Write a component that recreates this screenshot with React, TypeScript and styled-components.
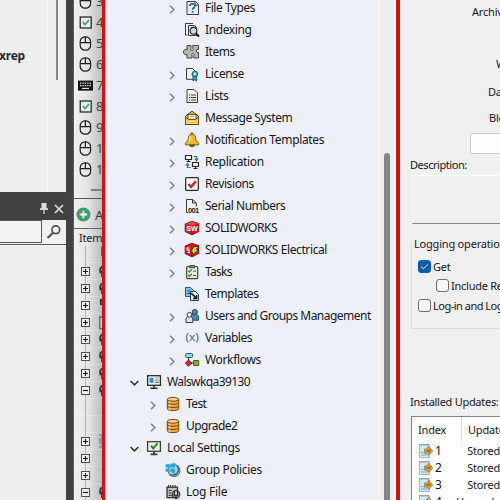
import React from 'react';
import styled, { createGlobalStyle } from 'styled-components';

const Global = createGlobalStyle`
  * { box-sizing: border-box; }
  body { margin: 0; overflow: hidden; }
`;

const Screen = styled.div`
  width: 500px;
  height: 500px;
  overflow: hidden;
  display: flex;
  background: #efefef;
  color: #17171b;
  font-family: 'Noto Sans', 'Open Sans', sans-serif;
  font-size: 12px;
  white-space: nowrap;
  svg { display: block; flex: none; overflow: visible; }
`;

/* ---------- far left pane ---------- */

const LeftPane = styled.div`
  width: 66px;
  flex: none;
  display: flex;
  flex-direction: column;
  background: #efefef;
`;
const LeftTop = styled.div`
  height: 192px;
  display: flex;
  justify-content: space-between;
  overflow: hidden;
`;
const Keyword = styled.div`
  width: 49px;
  padding-top: 48px;
  margin-left: -1px;
  font-weight: 700;
  font-size: 12px;
  line-height: 16px;
  letter-spacing: -0.2px;
  color: #25252d;
  border-right: 1px solid #fafafa;
`;
const LeftThumb = styled.div`
  width: 2px;
  height: 80px;
  margin-right: 8px;
  background: #858585;
`;
const PanelTitle = styled.div`
  height: 28px;
  background: #414141;
  display: flex;
  justify-content: flex-end;
  align-items: flex-end;
  gap: 6px;
  padding: 0 2px 6px 0;
`;
const SearchRow = styled.div`
  height: 25px;
  display: flex;
  border-bottom: 1px solid #5a5a5a;
`;
const SearchInput = styled.div`
  width: 42px;
  height: 23px;
  background: #f3f3f3;
  border: 1px solid #555;
  border-left: 0;
`;
const SearchButton = styled.div`
  flex: 1;
  display: flex;
  align-items: center;
  justify-content: center;
  background: #f1f1f1;
`;
const Splitter = styled.div`
  width: 8px;
  flex: none;
  background: #434343;
  border-right: 1px solid #5a5a5a;
`;

/* ---------- middle strip ---------- */

const Strip = styled.div`
  width: 28px;
  flex: none;
  display: flex;
  flex-direction: column;
  overflow: hidden;
  background: linear-gradient(90deg, #f1f1f1 0%, #e4e4e4 50%, #bcbcbc 100%);
`;
const InputList = styled.div`
  flex: none;
  height: 199px;
  overflow: hidden;
  border-bottom: 1px solid #555;
`;
const InputRow = styled.div`
  height: 21px;
  display: flex;
  align-items: center;
  padding-left: 4px;
  gap: 3px;
  font-size: 13px;
  line-height: 21px;
  color: #444;
  &:first-child { margin-top: -9px; }
`;
const StripThumb = styled.div`
  height: 2px;
  margin: 9px 0 0 17px;
  background: #818181;
`;
const AddRow = styled.div`
  flex: none;
  height: 30px;
  display: flex;
  align-items: center;
  gap: 4px;
  padding: 2px 0 0 2px;
  border-bottom: 1px solid #666;
  font-size: 13px;
  color: #333;
`;
const ItemHead = styled.div`
  flex: none;
  height: 17px;
  padding-left: 5px;
  font-size: 11px;
  line-height: 18px;
  letter-spacing: -0.2px;
  color: #222;
`;
const NodeRow = styled.div`
  height: 17px;
  display: flex;
  align-items: center;
  padding-left: 7px;
  gap: 9px;
  border-bottom: 1px solid rgba(255, 255, 255, 0.25);
`;

/* ---------- tree ---------- */

const RedBar = styled.div<{ $w: number }>`
  width: ${(p) => p.$w}px;
  flex: none;
  background: #df0b0f;
`;
const TreePane = styled.div`
  width: 274px;
  flex: none;
  background: #edf0f9;
  border-left: 2px solid #f6f3f7;
  border-right: 1px solid #fff;
  overflow: hidden;
`;
const TreeRow = styled.div<{ $indent: number }>`
  height: 22px;
  display: flex;
  align-items: center;
  padding-left: ${(p) => p.$indent}px;
  &:first-child { margin-top: -3px; }
`;
const ArrowCell = styled.div`
  width: 12px;
  flex: none;
  margin-right: 6px;
  padding-top: 2px;
  display: flex;
  justify-content: center;
`;
const TreeLabel = styled.span<{ $sp: number }>`
  margin-left: 5px;
  font-size: 12px;
  line-height: 22px;
  letter-spacing: ${(p) => p.$sp}px;
`;
const ScrollTrack = styled.div`
  width: 17px;
  flex: none;
  background: #efefef;
  border-right: 2px solid #fafafa;
  padding: 153px 0 0 5px;
`;
const ScrollThumb = styled.div`
  width: 6px;
  height: 350px;
  border-radius: 3px;
  background: #858587;
`;

/* ---------- right pane ---------- */

const RightPane = styled.div`
  flex: 1;
  min-width: 0;
  display: flex;
  flex-direction: column;
  background: #f0f0f0;
  overflow: hidden;
  font-size: 11px;
  letter-spacing: -0.2px;
`;
const FieldLabel = styled.div<{ $x: number; $h: number }>`
  flex: none;
  height: ${(p) => p.$h}px;
  line-height: 16px;
  padding-left: ${(p) => p.$x}px;
`;
const DescLabel = styled.div`
  flex: none;
  height: 21px;
  line-height: 22px;
  padding-left: 10px;
  letter-spacing: -0.45px;
`;
const Fields = styled.div`
  height: 133px;
  flex: none;
  padding-top: 4px;
`;
const FieldBox = styled.div`
  flex: none;
  height: 21px;
  margin-left: 70px;
  width: 60px;
  border: 1px solid #c5c5c5;
  border-radius: 3px;
  background: #fdfdfd;
`;
const DescBox = styled.div`
  flex: none;
  height: 49px;
  margin-left: 12px;
  border: 1px solid #fff;
  border-right: 0;
  border-bottom: 1px solid #828282;
`;
const Group = styled.div`
  flex: none;
  margin: 12px 0 0 11px;
  height: 93px;
  display: flex;
  flex-direction: column;
`;
const GroupHead = styled.div`
  height: 16px;
  line-height: 15px;
  display: flex;
  gap: 2px;
  letter-spacing: -0.2px;
`;
const GroupTick = styled.div`
  width: 6px;
  margin-top: 6px;
  border-top: 1px solid #dcdcdc;
  border-left: 1px solid #dcdcdc;
`;
const GroupBody = styled.div`
  flex: 1;
  border-left: 1px solid #dcdcdc;
  border-bottom: 1px solid #dcdcdc;
  padding-top: 5px;
`;
const CheckRow = styled.div<{ $x: number; $h: number; $sp: number }>`
  height: ${(p) => p.$h}px;
  display: flex;
  align-items: center;
  gap: 2px;
  padding-left: ${(p) => p.$x}px;
  letter-spacing: ${(p) => p.$sp}px;
`;
const Check = styled.span<{ $on?: boolean }>`
  width: 13px;
  height: 13px;
  flex: none;
  border-radius: 3px;
  border: 1px solid ${(p) => (p.$on ? '#0a5cae' : '#707070')};
  background: ${(p) => (p.$on ? '#0a5cae' : '#f7f7f7')};
  display: flex;
  align-items: center;
  justify-content: center;
`;
const InstalledLabel = styled.div`
  flex: none;
  margin-top: 64px;
  height: 23px;
  line-height: 17px;
  padding-left: 10px;
  letter-spacing: -0.28px;
`;
const Table = styled.div`
  flex: none;
  height: 100px;
  margin-left: 11px;
  border-left: 1px solid #828282;
  border-top: 1px solid #828282;
  background: #fff;
`;
const TableHead = styled.div`
  height: 25px;
  display: flex;
  line-height: 26px;
`;
const HeadCell = styled.div<{ $w: number }>`
  width: ${(p) => p.$w}px;
  flex: none;
  padding-left: 6px;
  border-right: 1px solid #dedede;
  letter-spacing: -0.2px;
`;
const TableRow = styled.div`
  height: 17px;
  display: flex;
  align-items: center;
  padding-left: 6px;
`;
const IndexText = styled.span`
  width: 34px;
  padding-left: 1px;
  font-size: 12px;
`;

/* ---------- icons ---------- */

const Mouse = () => (
  <svg width="15" height="15" viewBox="0 0 15 15" fill="none" stroke="#1d1d1d" strokeWidth="1.2">
    <rect x="2.2" y="0.8" width="10.4" height="13.4" rx="4.8" />
    <path d="M2.2 6.6h10.4M7.4 0.8v5.8" />
  </svg>
);
const TickBox = () => (
  <svg width="15" height="15" viewBox="0 0 15 15" fill="none">
    <rect x="2.2" y="2" width="11" height="11" fill="#e6ece8" stroke="#1d1d1d" strokeWidth="1.2" />
    <path d="M4.8 7.2l2.2 2.3 4-4.3" stroke="#43a078" strokeWidth="1.7" />
  </svg>
);
const Keyboard = () => (
  <svg width="15" height="15" viewBox="0 0 15 15">
    <rect x="0" y="2.6" width="15" height="10" fill="#111" />
    <path d="M2 5.2h11.5M2 7.7h11.5" stroke="#eee" strokeWidth="1.2" strokeDasharray="1.4 1" />
    <path d="M4 10.4h7" stroke="#eee" strokeWidth="1.1" />
  </svg>
);
const Pin = () => (
  <svg width="8" height="11" viewBox="0 0 8 11" fill="#dcdcdc">
    <path d="M1.5 0h5v5.2H8V7H4.6v4H3.4V7H0V5.2h1.5z" />
  </svg>
);
const Cross = () => (
  <svg width="10" height="10" viewBox="0 0 10 10" stroke="#dcdcdc" strokeWidth="1.7">
    <path d="M1 1l8 8M9 1l-8 8" />
  </svg>
);
const Magnifier = () => (
  <svg width="16" height="16" viewBox="0 0 16 16" fill="none" stroke="#505050">
    <circle cx="9.8" cy="5.8" r="3.9" strokeWidth="1.7" />
    <path d="M7 8.8L1.6 14" strokeWidth="2.2" />
  </svg>
);
const AddIcon = () => (
  <svg width="15" height="15" viewBox="0 0 15 15">
    <circle cx="7.4" cy="7.5" r="7" fill="#3f9d6d" />
    <path d="M7.4 3.8v7.4M3.7 7.5h7.4" stroke="#fff" strokeWidth="1.8" />
  </svg>
);
const Expander = ({ kind }: { kind: string }) => (
  <svg width="9" height="17" viewBox="0 0 9 17" fill="none">
    <path d="M4.5 0v17" stroke="#b5b5b5" />
    {kind !== 'line' && (
      <>
        <rect x="0.5" y="4.5" width="8" height="8" fill="#f0f1f3" stroke="#4a5058" />
        <path d={kind === 'plus' ? 'M2 8.5h5M4.5 6v5' : 'M2 8.5h5'} stroke="#161e28" strokeWidth="1.2" />
      </>
    )}
  </svg>
);
const NodeIcon = ({ kind }: { kind: string }) => (
  <svg width="12" height="15" viewBox="0 0 12 15" fill="none">
    {kind === 'part' && (
      <>
        <path d="M6 2C1.5 2 .4 5 1.4 8.4L3 8.6V13h5V2z" fill="#8b97a4" />
        <path d="M6 2C1.5 2 .4 5 1.4 8.4L3 7.4V13" stroke="#26394d" strokeWidth="1.7" />
      </>
    )}
    {kind === 'block' && <path d="M1.5 1.5h8v5h-8z" fill="#2f4c78" stroke="#17263c" />}
    {kind === 'sheet' && <path d="M.8 2h9v11.5h-9z" fill="#d1d8df" stroke="#47688f" strokeWidth="1.3" />}
    {kind === 'doc' && <path d="M2.5 0h8v9h-8z" fill="#d5d7d9" stroke="#596472" />}
    {kind === 'stack' && <path d="M0 1h8v4H0M0 9h8v4H0M2 3h4M2 11h4M0 7h8" stroke="#667a7a" />}
  </svg>
);

const ArrowRight = () => (
  <svg width="6" height="9" viewBox="0 0 6 9" fill="none" stroke="#85868c" strokeWidth="1.6">
    <path d="M1 0.7l3.8 3.8L1 8.3" />
  </svg>
);
const ArrowDown = () => (
  <svg width="9" height="6" viewBox="0 0 9 6" fill="none" stroke="#35363c" strokeWidth="1.6">
    <path d="M0.6 1l3.9 3.8L8.4 1" />
  </svg>
);

const INK = '#3b3b3b';
const glyphs: Record<string, React.ReactNode> = {
  filetypes: (
    <>
      <path d="M3 1.5h8.5l3 3V14.5H3z" fill="#e8edf5" stroke={INK} />
      <path d="M11 1.5v3.5h3.5" stroke={INK} />
      <path d="M5.9 6.1c0-3 5-2.9 5-.3 0 2-2.3 1.8-2.3 4M8.6 11v1.7" stroke="#286ca5" strokeWidth="1.8" />
    </>
  ),
  indexing: (
    <>
      <path d="M3.5 13H1.5V1.5H9" stroke={INK} />
      <path d="M4.5 3.5h6l2 2v8h-8z" fill="#e9e9e5" stroke={INK} />
      <circle cx="9.5" cy="8.8" r="3.4" fill="#c5dce6" stroke="#222" strokeWidth="1.1" />
      <path d="M12 11.5l3 3" stroke="#111" strokeWidth="2" />
    </>
  ),
  items: (
    <path
      d="M3 1.5h4v3c-.8.9-.2 2 .9 2s1.7-1.1.9-2v-3h5.7v4.2c-1-.9-2.2-.3-2.2 1.3s1.2 2.2 2.2 1.3V14H9.8v-2.500c.8-.9.2-2-.9-2s-1.700 1.100-.9 2V14H3v-3.700C1.800 11.300-.6 10.400-.6 8S1.800 4.800 3 5.800z"
      fill="#b6b8b3" stroke="#454745"
    />
  ),
  license: (
    <>
      <path d="M2.5 2.5h6l3 3v7.8h-9z" fill="#f0f0ec" stroke={INK} />
      <path d="M9 9v6l1.8-1.4L12.6 15V9" fill="#33a9cb" stroke="#155c7c" />
      <circle cx="10.8" cy="8" r="2.8" fill="#4fc2da" stroke="#155c7c" />
      <circle cx="10.8" cy="8" r="0.9" fill="#e5ffff" />
    </>
  ),
  lists: (
    <>
      <path d="M3 1.5h7l3.5 3.5v9.5H3z" fill="#f1f1ee" stroke={INK} />
      <path d="M5 7h1M7 7h5M5 9.5h1M7 9.5h5M5 12h1M7 12h5" stroke={INK} />
    </>
  ),
  message: (
    <>
      <path d="M1.5 6.2L8 1.2l6.5 5v8.3h-13z" fill="#f5ba36" stroke="#493816" />
      <path d="M4 4.5h8v5H4z" fill="#fffbe9" stroke="#654c1d" />
      <path d="M5.5 6.5h5" stroke="#b3a98c" />
      <path d="M1.5 7.5L5 9.5h6l3.5-2v7h-13z" fill="#ffd052" stroke="#654c1d" />
    </>
  ),
  bell: (
    <>
      <path d="M5.5 12.8c.2 2.4 4.8 2.4 5 0z" fill="#5d4717" stroke="#4d3c15" />
      <path d="M8 2.3c3.8 0 3.5 3.2 4 6l2.6 3v1.5H1.4v-1.5L4 8.3c.5-2.8.2-6 4-6z" fill="#eebc2c" stroke="#775717" />
      <path d="M6.2 4.5L5.6 9" stroke="#fff1a6" strokeWidth="1.3" />
      <circle cx="8" cy="1.6" r="1" stroke="#775717" />
    </>
  ),
  replication: (
    <>
      <path d="M1.5 1.5h6v4h-6zM2.5 7.5h4M4.5 5.5v2M8.5 8.5h6v4h-6zM9.5 14.5h4M11.5 12.5v2" fill="#f4f4f4" stroke="#292929" strokeWidth="1.2" />
      <path d="M9.5 2.5h3v3.7M10.8 4.7l1.7 2 1.7-2M6.5 13.5h-3V10M1.8 11.7l1.7-2 1.7 2" stroke="#317ba5" strokeWidth="1.2" />
    </>
  ),
  revisions: (
    <>
      <rect x="1.7" y="1.7" width="12.6" height="12.6" rx="1" fill="#fff" stroke="#2b2b2b" strokeWidth="1.3" />
      <path d="M4.4 8l2.7 2.8 4.6-5.4" stroke="#d8202f" strokeWidth="2.5" />
    </>
  ),
  electrical: (
    <>
      <path d="M1.2 4L7.8 1.3l6.8 2.2v8.1L8 14.8l-6.8-3.1z" fill="#d51d26" stroke="#8f1118" />
      <path d="M5.5 6H3.2v2h2v2.5H3" stroke="#fff" strokeWidth="1.2" />
      <path d="M10 4.5h4.3l-2 3h2L7.5 14l1.4-4H6.5z" fill="#ffd22c" stroke="#292005" strokeWidth="0.8" />
    </>
  ),
  tasks: (
    <>
      <rect x="2.7" y="2.5" width="11" height="12.2" rx="1" fill="#e2ecdc" stroke="#41483d" strokeWidth="1.2" />
      <path d="M5.7 1.5h5v2.3h-5z" fill="#8b9486" stroke="#41483d" />
      <path d="M4.2 6.7l1.2 1.2L7.7 5.5M4.2 11l1.2 1.2 2.3-2.4" stroke="#34863a" strokeWidth="1.3" />
      <path d="M9.2 7.2h2.8M9.2 11.5h2.8" stroke="#465e42" />
    </>
  ),
  templates: (
    <>
      <path d="M1.5 1.5h5l3 3v6h-8z" fill="#72c5ef" stroke="#1b6389" />
      <path d="M3 5h4M3 7.5h3" stroke="#1b6389" />
      <path d="M6.5 5.5h5l3 3v6h-8z" fill="#d8e9ee" stroke="#31434c" />
      <path d="M5.5 7.2c2.2-.2 4 1.6 6.6 5M12.6 8.9v3.6H9.2" stroke="#171717" strokeWidth="1.5" />
    </>
  ),
  users: (
    <>
      <path d="M7 9c0-4 7.5-4 7.5 0v3.2H7z" fill="#4d8fb3" stroke="#204b64" />
      <circle cx="10.8" cy="4" r="2.6" fill="#4b88a9" stroke="#204b64" />
      <path d="M2 14.5V11c0-3.5 6.8-3.5 6.8 0v3.5z" fill="#dce4e9" stroke="#37444d" />
      <circle cx="5.4" cy="6.8" r="2.4" fill="#e3eaee" stroke="#37444d" />
    </>
  ),
  workflows: (
    <>
      <path d="M4.5 5v6h7" stroke="#222" />
      <rect x="1.5" y="1.5" width="7" height="4" rx="1" fill="#8ad7ed" stroke="#21647a" />
      <path d="M4.5 8l3.1 3.1-3.1 3.1-3.1-3.1z" fill="#df2626" stroke="#7d1212" />
      <path d="M9.7 8.5h5v5h-5z" fill="#8aae27" stroke="#3f5b12" />
    </>
  ),
  server: (
    <>
      <rect x="1.6" y="1.7" width="12.8" height="9.6" fill="#f4f7f7" stroke="#292929" strokeWidth="1.3" />
      <path d="M3.5 3.8h4v5h-4z" fill="#348dc0" />
      <path d="M9 4h3.8" stroke="#d99034" />
      <path d="M9 6.2h3.8" stroke="#56a657" />
      <path d="M9 8.4h3.8" stroke="#2e6590" />
      <path d="M8 11.5v2.8M4.5 14.3h7" stroke="#292929" strokeWidth="1.4" />
    </>
  ),
  database: (
    <>
      <path d="M2.3 3.5v9.3c0 2.4 11.4 2.4 11.4 0V3.5" fill="#edaa3d" stroke="#754516" />
      <path d="M4.6 5.8v8" stroke="#ffe0a0" strokeWidth="1.6" />
      <path d="M2.3 6.6c0 2.2 11.4 2.2 11.4 0M2.3 9.8c0 2.2 11.4 2.2 11.4 0" stroke="#754516" />
      <ellipse cx="8" cy="3.3" rx="5.7" ry="1.9" fill="#ffd47c" stroke="#754516" />
    </>
  ),
  local: (
    <>
      <rect x="1.6" y="1.7" width="12.8" height="9.6" fill="#edf4e9" stroke="#3d403b" strokeWidth="1.3" />
      <path d="M5 5.8l2.3 2.6 4.2-5" stroke="#38842a" strokeWidth="2.1" />
      <path d="M8 11.5v2.8M4.5 14.3h7" stroke="#3d403b" strokeWidth="1.8" />
    </>
  ),
  policies: (
    <>
      <circle cx="9" cy="8.5" r="5.9" fill="#c4d5da" stroke="#59707c" strokeWidth="1.2" />
      <path d="M12 4c3 4 1 7-2.5 9.5M5 12.8c2 .7 4 .2 5.5-1.3" stroke="#446b82" strokeWidth="1.6" />
      <path d="M0.5 2.4l4-.6v3.7h-4zM5.4 1.7L10 1v4.5H5.4zM.5 6.4h4v3.7l-4-.6zM5.4 6.4H10v4.5l-4.6-.7z" fill="#21aadc" />
    </>
  ),
  log: (
    <>
      <path d="M2 3.2h10.5v10.5H2z" fill="#bfc1bd" stroke="#333" strokeWidth="1.3" />
      <path d="M3.5 1v3M5.7 1v3M7.9 1v3M10.1 1v3" stroke="#333" />
      <path d="M3.7 6.5h3M3.7 9h2.5M3.7 11.5h3" stroke="#333" />
      <circle cx="11" cy="10.3" r="3.7" fill="#d3d4d0" stroke="#393939" strokeWidth="1.3" />
      <path d="M9.3 7v4.4h3.4V7M11 11.4V15" stroke="#333" strokeWidth="1.5" />
    </>
  ),
  serial: (
    <>
      <path d="M2.5 14.5v-13h6.3l3.5 3.500v9.500z" fill="#f0f0ec" />
      <path d="M4 14.5H2.5v-13h6.3l3.5 3.5v3.5M8.5 1.5V5h3.8" stroke={INK} />
      <text x="3.9" y="14.8" fontSize="7.4" fontWeight="700" fill="#202020" fontFamily="Liberation Sans, sans-serif" textLength="11.3">001</text>
    </>
  ),
  solidworks: (
    <>
      <path d="M1.2 4L7.8 1.3l6.8 2.2v8.1L8 14.8l-6.8-3.1z" fill="#c81825" stroke="#8f1118" />
      <path d="M1.5 4L8 5.2l6.4-1.6L7.8 1.5z" fill="#dd4a51" />
      <text x="2.2" y="11.3" fontSize="7.5" fontWeight="700" fill="#fff" fontFamily="Liberation Sans, sans-serif" textLength="11.6" lengthAdjust="spacingAndGlyphs">SW</text>
    </>
  ),
  variables: (
    <text x="1.5" y="11.4" fontSize="11" fill="#3a6a84" fontFamily="Noto Sans, sans-serif" textLength="13.4" lengthAdjust="spacingAndGlyphs">(x)</text>
  ),
};
const TreeIcon = ({ name }: { name: string }) => (
  <svg width="16" height="16" viewBox="0 0 16 16" fill="none">
    {glyphs[name]}
  </svg>
);

const PageIcon = () => (
  <svg width="16" height="16" viewBox="0 0 16 16" fill="none">
    <path d="M1.5 2h10v12.5h-10z" fill="#d3eaf7" stroke="#8fa6b3" strokeWidth="0.8" />
    <path d="M1.5 1.6h10" stroke="#4f5c55" strokeDasharray="1 1" />
    <path d="M3 9.5h2.5M3 12h6" stroke="#68a3d3" />
    <path d="M10.5 3.2l4.3 4.6-4.3 4.6-1.6-2.2H6.5V6h2.4z" fill="#d79b34" stroke="#9a742f" strokeWidth="0.7" />
    <path d="M8.5 7.9h4" stroke="#7c571c" strokeWidth="1.1" />
  </svg>
);

/* ---------- data ---------- */

type Row = [label: string, icon: string, depth: number, arrow: '' | 'r' | 'd', spacing: number];
const rows: Row[] = [
  ['File Types', 'filetypes', 2, 'r', -0.48],
  ['Indexing', 'indexing', 2, '', -0.4],
  ['Items', 'items', 2, '', -0.5],
  ['License', 'license', 2, 'r', -0.42],
  ['Lists', 'lists', 2, 'r', -0.35],
  ['Message System', 'message', 2, '', -0.48],
  ['Notification Templates', 'bell', 2, 'r', -0.34],
  ['Replication', 'replication', 2, 'r', -0.32],
  ['Revisions', 'revisions', 2, 'r', -0.4],
  ['Serial Numbers', 'serial', 2, 'r', -0.48],
  ['SOLIDWORKS', 'solidworks', 2, 'r', -0.48],
  ['SOLIDWORKS Electrical', 'electrical', 2, 'r', -0.39],
  ['Tasks', 'tasks', 2, 'r', -0.7],
  ['Templates', 'templates', 2, '', -0.5],
  ['Users and Groups Management', 'users', 2, 'r', -0.52],
  ['Variables', 'variables', 2, 'r', -0.5],
  ['Workflows', 'workflows', 2, 'r', -0.34],
  ['Walswkqa39130', 'server', 0, 'd', -0.6],
  ['Test', 'database', 1, 'r', -0.6],
  ['Upgrade2', 'database', 1, 'r', -0.6],
  ['Local Settings', 'local', 0, 'd', -0.36],
  ['Group Policies', 'policies', 1, '', -0.35],
  ['Log File', 'log', 1, '', -0.25],
];

const inputs: [React.ReactNode, string][] = [
  [<Mouse />, '3'], [<TickBox />, '4'], [<Mouse />, '5'], [<Mouse />, '6'], [<Keyboard />, '7'],
  [<TickBox />, '8'], [<Mouse />, '9'], [<Mouse />, '10'], [<Mouse />, '11'],
];

const nodes: [string, string][] = [
  ['line', 'doc'], ['plus', 'part'], ['plus', 'part'], ['plus', 'block'], ['plus', 'sheet'],
  ['plus', 'part'], ['plus', 'part'], ['plus', 'part'], ['minus', 'part'], ['line', ''],
  ['line', ''], ['plus', 'stack'], ['plus', ''], ['plus', ''], ['minus', 'part'],
];

const updates: [string, string][] = [['1', 'Stored'], ['2', 'Stored'], ['3', 'Stored'], ['4', 'Upgrade']];

export default function App() {
  return (
    <Screen>
      <Global />
      <LeftPane>
        <LeftTop>
          <Keyword>xrep</Keyword>
          <LeftThumb />
        </LeftTop>
        <PanelTitle><Pin /><Cross /></PanelTitle>
        <SearchRow>
          <SearchInput />
          <SearchButton><Magnifier /></SearchButton>
        </SearchRow>
      </LeftPane>
      <Splitter />
      <Strip>
        <InputList>
          {inputs.map(([icon, n]) => <InputRow key={n}>{icon}{n}</InputRow>)}
          <StripThumb />
        </InputList>
        <AddRow><AddIcon />Add</AddRow>
        <ItemHead>Item</ItemHead>
        <div>
          {nodes.map(([kind, icon], i) => (
            <NodeRow key={i}><Expander kind={kind} /><NodeIcon kind={icon} /></NodeRow>
          ))}
        </div>
      </Strip>
      <RedBar $w={3} />
      <TreePane>
        {rows.map(([label, icon, depth, arrow, sp]) => (
          <TreeRow key={label} $indent={21 + depth * 19}>
            <ArrowCell>{arrow === 'r' ? <ArrowRight /> : arrow === 'd' ? <ArrowDown /> : null}</ArrowCell>
            <TreeIcon name={icon} />
            <TreeLabel $sp={sp}>{label}</TreeLabel>
          </TreeRow>
        ))}
      </TreePane>
      <ScrollTrack><ScrollThumb /></ScrollTrack>
      <RedBar $w={4} />
      <RightPane>
        <Fields>
          <FieldLabel $x={72} $h={52}>Archive</FieldLabel>
          <FieldLabel $x={96} $h={28}>Web</FieldLabel>
          <FieldLabel $x={88} $h={26}>Database</FieldLabel>
          <FieldLabel $x={89} $h={20}>Block</FieldLabel>
        </Fields>
        <FieldBox />
        <DescLabel>Description:</DescLabel>
        <DescBox />
        <Group>
          <GroupHead><GroupTick />Logging operations</GroupHead>
          <GroupBody>
            <CheckRow $x={6} $h={19} $sp={-0.2}>
              <Check $on>
                <svg width="9" height="9" viewBox="0 0 9 9" fill="none" stroke="#fff"><path d="M1.2 4.6l2.3 2.2 4.2-4.3" /></svg>
              </Check>
              Get
            </CheckRow>
            <CheckRow $x={24} $h={19} $sp={-0.25}><Check />Include Revisions</CheckRow>
            <CheckRow $x={6} $h={20} $sp={-0.5}><Check />Log-in and Log-out</CheckRow>
          </GroupBody>
        </Group>
        <InstalledLabel>Installed Updates:</InstalledLabel>
        <Table>
          <TableHead><HeadCell $w={50}>Index</HeadCell><HeadCell $w={80}>Update</HeadCell></TableHead>
          {updates.map(([n, t]) => (
            <TableRow key={n}><PageIcon /><IndexText>{n}</IndexText>{t}</TableRow>
          ))}
        </Table>
      </RightPane>
    </Screen>
  );
}
